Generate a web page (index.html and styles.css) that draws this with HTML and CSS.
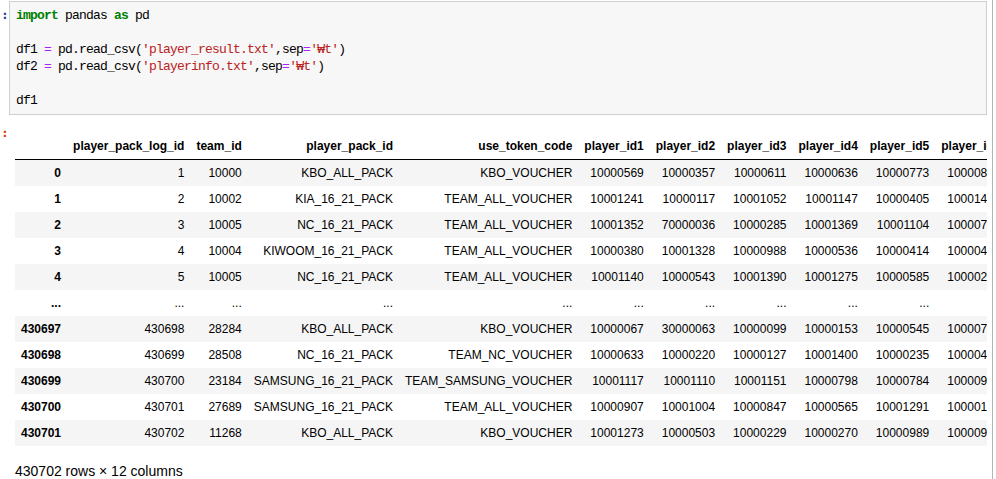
FILE: index.html
```html
<!DOCTYPE html>
<html lang="en">
<head>
<meta charset="utf-8">
<title>Notebook</title>
<link rel="stylesheet" href="styles.css">
</head>
<body>
<div class="notebook">
  <div class="cell input">
    <div class="prompt in-prompt">:</div>
    <div class="code-box">
      <div class="line"><span class="kw">import</span> pandas <span class="kw">as</span> pd</div>
      <div class="line"> </div>
      <div class="line">df1 <span class="op">=</span> pd.read_csv(<span class="str">'player_result.txt'</span>,sep<span class="op">=</span><span class="str">'₩t'</span>)</div>
      <div class="line">df2 <span class="op">=</span> pd.read_csv(<span class="str">'playerinfo.txt'</span>,sep<span class="op">=</span><span class="str">'₩t'</span>)</div>
      <div class="line"> </div>
      <div class="line">df1</div>
    </div>
  </div>
  <div class="cell output">
    <div class="prompt out-prompt">:</div>
    <div class="output-area">
      <table class="df">
        <thead>
          <tr><th></th><th>player_pack_log_id</th><th>team_id</th><th>player_pack_id</th><th>use_token_code</th><th>player_id1</th><th>player_id2</th><th>player_id3</th><th>player_id4</th><th>player_id5</th><th>player_id6</th><th>player_id7</th><th>player_id8</th></tr>
        </thead>
        <tbody>
          <tr><th>0</th><td>1</td><td>10000</td><td>KBO_ALL_PACK</td><td>KBO_VOUCHER</td><td>10000569</td><td>10000357</td><td>10000611</td><td>10000636</td><td>10000773</td><td>10000812</td><td>10000421</td><td>10001033</td></tr>
          <tr><th>1</th><td>2</td><td>10002</td><td>KIA_16_21_PACK</td><td>TEAM_ALL_VOUCHER</td><td>10001241</td><td>10000117</td><td>10001052</td><td>10001147</td><td>10000405</td><td>10001420</td><td>10000318</td><td>10000972</td></tr>
          <tr><th>2</th><td>3</td><td>10005</td><td>NC_16_21_PACK</td><td>TEAM_ALL_VOUCHER</td><td>10001352</td><td>70000036</td><td>10000285</td><td>10001369</td><td>10001104</td><td>10000735</td><td>10001208</td><td>10000164</td></tr>
          <tr><th>3</th><td>4</td><td>10004</td><td>KIWOOM_16_21_PACK</td><td>TEAM_ALL_VOUCHER</td><td>10000380</td><td>10001328</td><td>10000988</td><td>10000536</td><td>10000414</td><td>10000451</td><td>10000690</td><td>10001377</td></tr>
          <tr><th>4</th><td>5</td><td>10005</td><td>NC_16_21_PACK</td><td>TEAM_ALL_VOUCHER</td><td>10001140</td><td>10000543</td><td>10001390</td><td>10001275</td><td>10000585</td><td>10000219</td><td>10000847</td><td>10000302</td></tr>
          <tr><th>...</th><td>...</td><td>...</td><td>...</td><td>...</td><td>...</td><td>...</td><td>...</td><td>...</td><td>...</td><td>...</td><td>...</td><td>...</td></tr>
          <tr><th>430697</th><td>430698</td><td>28284</td><td>KBO_ALL_PACK</td><td>KBO_VOUCHER</td><td>10000067</td><td>30000063</td><td>10000099</td><td>10000153</td><td>10000545</td><td>10000791</td><td>10001116</td><td>10000248</td></tr>
          <tr><th>430698</th><td>430699</td><td>28508</td><td>NC_16_21_PACK</td><td>TEAM_NC_VOUCHER</td><td>10000633</td><td>10000220</td><td>10000127</td><td>10001400</td><td>10000235</td><td>10000466</td><td>10001359</td><td>10000580</td></tr>
          <tr><th>430699</th><td>430700</td><td>23184</td><td>SAMSUNG_16_21_PACK</td><td>TEAM_SAMSUNG_VOUCHER</td><td>10001117</td><td>10001110</td><td>10001151</td><td>10000798</td><td>10000784</td><td>10000937</td><td>10000612</td><td>10001025</td></tr>
          <tr><th>430700</th><td>430701</td><td>27689</td><td>SAMSUNG_16_21_PACK</td><td>TEAM_ALL_VOUCHER</td><td>10000907</td><td>10001004</td><td>10000847</td><td>10000565</td><td>10001291</td><td>10000153</td><td>10000774</td><td>10001362</td></tr>
          <tr><th>430701</th><td>430702</td><td>11268</td><td>KBO_ALL_PACK</td><td>KBO_VOUCHER</td><td>10001273</td><td>10000503</td><td>10000229</td><td>10000270</td><td>10000989</td><td>10000962</td><td>10000381</td><td>10000714</td></tr>
        </tbody>
      </table>
      <p class="shape">430702 rows × 12 columns</p>
    </div>
  </div>
</div>
</body>
</html>
```

FILE: styles.css
```css
html, body {
  margin: 0;
  padding: 0;
  background: #ffffff;
}

body {
  width: 996px;
  height: 479px;
  overflow: hidden;
  font-family: "Liberation Sans", Arial, sans-serif;
  color: #000;
}

.notebook {
  width: 993px;
  height: 479px;
  border-right: 1px solid #b4b4b4;
  box-sizing: border-box;
  padding-top: 1px;
  padding-right: 5px;
}

.cell {
  display: flex;
  align-items: flex-start;
}

.prompt {
  width: 9px;
  flex: none;
  padding-left: 1px;
  box-sizing: border-box;
  font-family: "DejaVu Sans Mono", monospace;
  font-weight: bold;
  font-size: 13px;
  line-height: 17px;
  white-space: nowrap;
}

.in-prompt {
  color: #303f9f;
  padding-top: 5px;
}

.out-prompt {
  color: #d84315;
  padding-top: 4px;
}

.code-box {
  flex: 1;
  min-width: 0;
  background: #f7f7f7;
  border: 1px solid #cfcfcf;
  padding: 5px 6px;
  font-family: "Liberation Mono", "DejaVu Sans Mono", monospace;
  font-size: 13px;
  letter-spacing: -0.8px;
  line-height: 17px;
  color: #000;
}

.line {
  white-space: pre;
  height: 17px;
}

.kw {
  color: #008000;
  font-weight: bold;
}

.op {
  color: #aa22ff;
}

.str {
  color: #ba2121;
}

.output {
  padding-top: 5px;
}

.output-area {
  flex: 1;
  min-width: 0;
  overflow: hidden;
  margin-left: 6px;
  padding-top: 13px;
}

.df {
  border-collapse: collapse;
  border-spacing: 0;
  width: max-content;
  font-size: 12px;
  color: #000;
}

.df thead {
  border-bottom: 1px solid #000;
}

.df th,
.df td {
  text-align: right;
  vertical-align: middle;
  padding: 6px;
  white-space: nowrap;
  line-height: 14px;
}

.df th {
  font-weight: bold;
}

.df td {
  font-weight: normal;
}

.df tbody tr:nth-child(odd) {
  background: #f5f5f5;
}

.shape {
  margin: 17px 0 0 0;
  font-size: 14px;
  line-height: 16px;
}
```
